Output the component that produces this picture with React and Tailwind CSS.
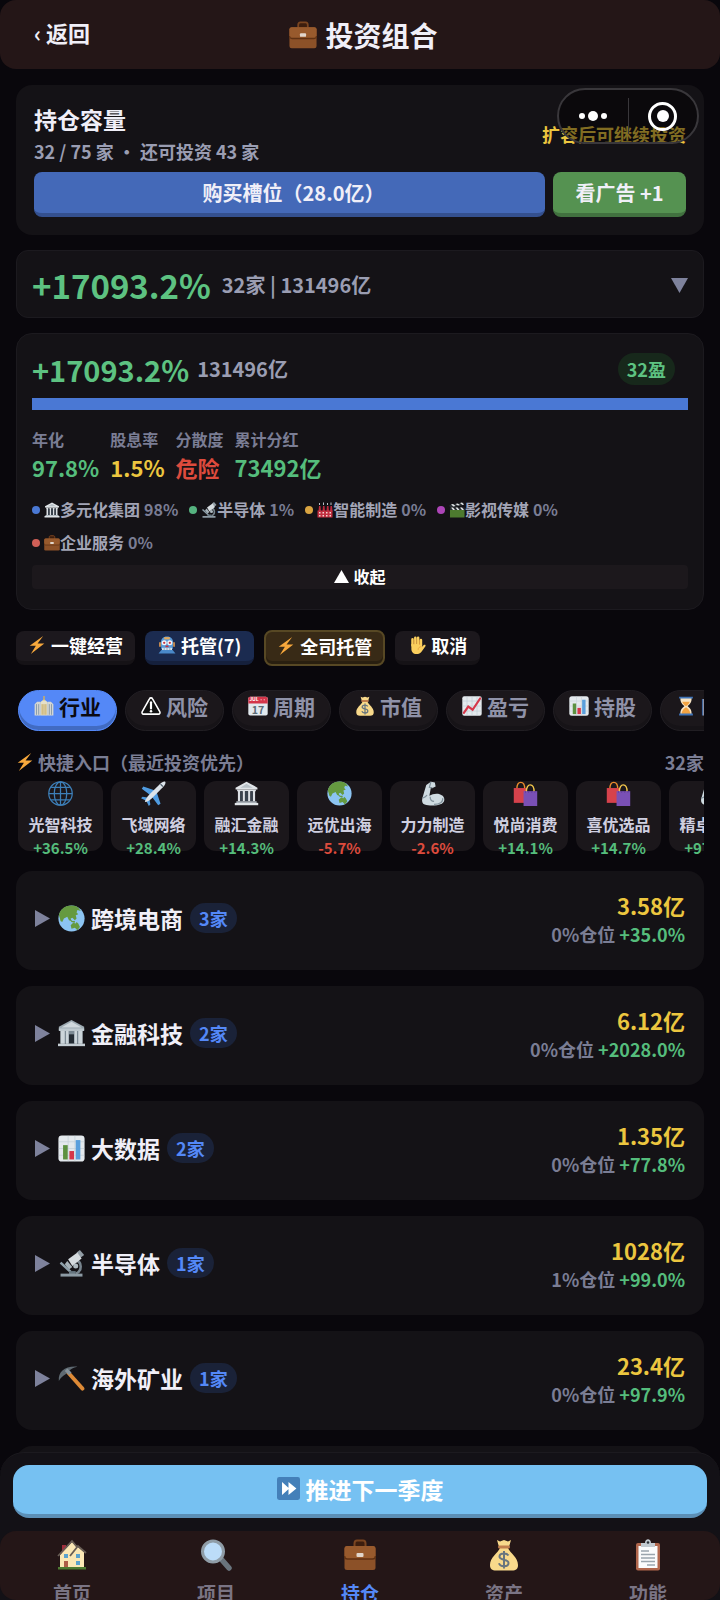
import { useState } from 'react'

const stats = [
  { label: '年化', value: '97.8%', color: 'text-[#55bd7c]' },
  { label: '股息率', value: '1.5%', color: 'text-[#ecc63f]' },
  { label: '分散度', value: '危险', color: 'text-[#dd4b3d]' },
  { label: '累计分红', value: '73492亿', color: 'text-[#55bd7c]' }
]

const sectors = [
  { icon: 'bank', name: '多元化集团', share: '98%', dot: 'bg-[#4a78d4]' },
  { icon: 'microscope', name: '半导体', share: '1%', dot: 'bg-[#56b380]' },
  { icon: 'factory', name: '智能制造', share: '0%', dot: 'bg-[#d9a441]' },
  { icon: 'clapper', name: '影视传媒', share: '0%', dot: 'bg-[#ad45b8]' },
  { icon: 'briefcase', name: '企业服务', share: '0%', dot: 'bg-[#d05f57]' }
]

const tabs = [
  { icon: 'city', name: '行业' },
  { icon: 'warning', name: '风险' },
  { icon: 'calendar', name: '周期' },
  { icon: 'money', name: '市值' },
  { icon: 'trend', name: '盈亏' },
  { icon: 'bars', name: '持股' },
  { icon: 'hourglass', name: '时间' }
]

const shortcuts = [
  { icon: 'globe', name: '光智科技', change: '+36.5%' },
  { icon: 'plane', name: '飞域网络', change: '+28.4%' },
  { icon: 'bank', name: '融汇金融', change: '+14.3%' },
  { icon: 'earth', name: '远优出海', change: '-5.7%' },
  { icon: 'arm', name: '力力制造', change: '-2.6%' },
  { icon: 'bags', name: '悦尚消费', change: '+14.1%' },
  { icon: 'bags', name: '喜优选品', change: '+14.7%' },
  { icon: 'arm', name: '精卓制造', change: '+97.2%' }
]

const industries = [
  { icon: 'earth', name: '跨境电商', count: 3, value: '3.58亿', share: '0%', change: '+35.0%' },
  { icon: 'bankOld', name: '金融科技', count: 2, value: '6.12亿', share: '0%', change: '+2028.0%' },
  { icon: 'bars', name: '大数据', count: 2, value: '1.35亿', share: '0%', change: '+77.8%' },
  { icon: 'microscope', name: '半导体', count: 1, value: '1028亿', share: '1%', change: '+99.0%' },
  { icon: 'pickaxe', name: '海外矿业', count: 1, value: '23.4亿', share: '0%', change: '+97.9%' }
]

const navItems = [
  { icon: 'house', name: '首页' },
  { icon: 'magnifier', name: '项目' },
  { icon: 'briefcase', name: '持仓' },
  { icon: 'money', name: '资产' },
  { icon: 'clipboard', name: '功能' }
]

const drawings = {
  briefcase: (
    <>
      <path d="M10.500 8V4.500C10.500 2.500 11.500 1.500 13 1.500h6c1.500 0 2.500 1 2.500 3V8" fill="#3d1e0e" stroke="#7b4520" strokeWidth="2" />
      <rect x="0.500" y="7" width="31" height="24" rx="2.500" fill="#8c5128" />
      <path d="M.5 10a3 3 0 0 1 3-3h25a3 3 0 0 1 3 3v7c0 2-1 3-3 3h-25c-2 0-3-1-3-3z" fill="#985a2d" />
      <path d="M.5 17c0 2 1 3 3 3h25c2 0 3-1 3-3" fill="none" stroke="#5f3113" strokeWidth="1.500" />
      <rect x="12.500" y="14" width="7" height="4" rx="1" fill="#e2d7cd" />
    </>
  ),
  bank: (
    <>
      <path d="M16 1 30 8.500V11H2V8.500z" fill="#e1e5e8" />
      <path d="M16 3.500 24 8.500H8z" fill="#b9c2c8" />
      <path d="M4 11h24v2H4zM5 13h3v13H5zM11 13h3v13h-3zM18 13h3v13h-3zM24 13h3v13h-3z" fill="#dce0e4" />
      <path d="M8 13h3v13H8zM14 13h4v13h-4zM21 13h3v13h-3z" fill="#39424d" />
      <path d="M3 26h26v2H3z" fill="#b5bec5" />
      <path d="M1 28h30v3H1z" fill="#e1e5e8" />
    </>
  ),
  bankOld: (
    <>
      <path d="M16 0 31 8v4H1V8z" fill="#9eabb3" />
      <path d="M16 2 28 9H4z" fill="#d0d8dd" />
      <path d="M3 12h26v16H3z" fill="#7d8b95" />
      <path d="M3 12h5v16H3zM9.500 12h3v16h-3zM19.500 12h3v16h-3zM24 12h5v16h-5z" fill="#ccd5da" />
      <path d="M13 17h6v11h-6z" fill="#242c34" />
      <path d="M1 10h30v3H1z" fill="#bfcad0" />
      <path d="M0 28h32v3H0z" fill="#c5ced4" />
    </>
  ),
  microscope: (
    <>
      <path d="M20 12c9 1 9 13 1 16" fill="none" stroke="#77848d" strokeWidth="3" />
      <path d="m22 3 4-3 5 6-4 3z" fill="#929da5" />
      <path d="m12 11 11-8 5 7-11 9z" fill="#d5dbdf" />
      <path d="m11 13 6 7-4 3-5-6z" fill="#a6b1b8" />
      <path d="m3 15 12 11" stroke="#8fa0aa" strokeWidth="3" />
      <circle cx="21" cy="19" r="3" fill="#aebac1" />
      <path d="M13 25h8v4h-8z" fill="#66757f" />
      <path d="M3 28h26v3.500H3z" fill="#8c9aa4" />
    </>
  ),
  factory: (
    <>
      <path d="M4 8h3l1 11H3zM12 8h3l1 11h-5zM20 8h3l1 11h-5zM27 8h3l1 11h-5z" fill="#bd2a3d" />
      <path d="M5 6V2M13 6V1M21 6V2M28 6V1" stroke="#b9c0c6" strokeWidth="2" />
      <path d="M1 17h30v14H1z" fill="#c12f40" />
      <path d="M4 20h3v3H4zM11 20h3v3h-3zM18 20h3v3h-3zM25 20h3v3h-3zM4 26h3v3H4zM11 26h3v3h-3zM18 26h3v3h-3zM25 26h3v3h-3z" fill="#f1d4cf" />
    </>
  ),
  clapper: (
    <>
      <path d="M2 15h29v16H2z" fill="#4d7a2f" />
      <path d="M2 11h29v5H2z" fill="#292f33" />
      <path d="m4 11 4 5h4l-4-5zM13 11l4 5h4l-4-5zM22 11l4 5h4l-4-5z" fill="#e8eaec" />
      <path d="M1 6 29 1l1 5L2 11z" fill="#292f33" />
      <path d="m4 5 5 4 4-1-5-4zM13 4l5 3 4-1-5-3zM22 2l5 4 3-1-4-4z" fill="#e8eaec" />
    </>
  ),
  zap: <path d="M27 0 3 17.500h11L5 32l24-18.500H17z" fill="#f7a83c" />,
  robot: (
    <>
      <path d="M5 13C5 5 9 1 16 1s11 4 11 12l-1 10H6z" fill="#5b9bd8" />
      <path d="M11 2h10v4H11z" fill="#e4a95c" />
      <path d="M2 11h3v8H2zM27 11h3v8h-3z" fill="#d8954f" />
      <circle cx="11" cy="12" r="4.500" fill="#f3f5f7" />
      <circle cx="21" cy="12" r="4.500" fill="#f3f5f7" />
      <circle cx="11" cy="12" r="2" fill="#c4323f" />
      <circle cx="21" cy="12" r="2" fill="#c4323f" />
      <path d="M14 17h4l1 3h-6z" fill="#c4323f" />
      <path d="M7 21h18v4H7z" fill="#d4e5f2" />
      <path d="M11 21v4M16 21v4M21 21v4" stroke="#5f7f9b" />
      <path d="M6 25h20l5 6H1z" fill="#4a89c9" />
    </>
  ),
  hand: (
    <>
      <path d="M8 17V6M13 15V3M18 15V3M23 17V7" stroke="#fbcf5e" strokeWidth="4.500" strokeLinecap="round" />
      <path d="M6 14h19v5l3-3c2-1 4 0 3 2l-7 10c-2 3-5 4-9 4-6 0-9-4-9-9z" fill="#fbcf5e" />
      <path d="M10.500 7v8M15.500 6v8M20.500 8v8M24 19c-4 0-6 2-6 6" stroke="#e29a3c" strokeWidth="1.200" fill="none" />
    </>
  ),
  city: (
    <>
      <path d="M1 13 5 9h5v22H1zM22 9h5l4 4v18h-9z" fill="#d4d6d2" />
      <path d="m10 10 6-5 6 5v21H10z" fill="#e5e0c8" />
      <path d="M16 0v7" stroke="#e0b64b" strokeWidth="2" />
      <path d="M4 13v17M7.500 13v17M24.500 13v17M28 13v17" stroke="#879aa9" strokeWidth="1.500" />
      <path d="M13 13v17M16 13v17M19 13v17" stroke="#c6a75a" strokeWidth="1.500" />
    </>
  ),
  warning: (
    <>
      <path d="M16 3c1 0 2 .5 2.500 1.500L30 25c1 2 0 4-2 4H4c-2 0-3-2-2-4L13.500 4.500C14 3.500 15 3 16 3z" fill="#111" stroke="#fff" strokeWidth="2.500" />
      <path d="M16 10v10" stroke="#fff" strokeWidth="3.500" strokeLinecap="round" />
      <circle cx="16" cy="24.500" r="2" fill="#fff" />
    </>
  ),
  calendar: (
    <>
      <rect x="0.500" y="1" width="31" height="30" rx="3" fill="#e2e9ee" />
      <path d="M.5 12V4a3 3 0 0 1 3-3h25a3 3 0 0 1 3 3v8z" fill="#d4364a" />
      <text x="2" y="8" fontSize="8" fontWeight="700" fill="#fff">JUL</text>
      <circle cx="21" cy="6" r="1.200" fill="#f0a0aa" />
      <circle cx="26" cy="6" r="1.200" fill="#f0a0aa" />
      <text x="16" y="28" fontSize="17" fontWeight="700" textAnchor="middle" fill="#5b6a74">17</text>
    </>
  ),
  money: (
    <>
      <path d="m9 1 3 1.500L16 1l4 1.500L23 1l-2 7H11z" fill="#f8d98b" />
      <path d="M12 9h8c2 5 10 9 10 17 0 4-2 5.500-6 5.500H8C4 31.500 2 30 2 26 2 18 10 14 12 9z" fill="#f8d98b" />
      <rect x="10" y="6.500" width="12" height="3" rx="1.500" fill="#c17f4d" />
      <path d="M20.500 16.500c-1-1.500-2.500-2-4.500-2-2.500 0-4.500 1.200-4.500 3 0 4.500 9 2 9 6.500 0 2-2 3.200-4.500 3.200S11.500 26 11 24.300M16 12v17.500" fill="none" stroke="#67757f" strokeWidth="2" />
    </>
  ),
  trend: (
    <>
      <rect x="0.500" y="0.500" width="31" height="31" rx="3" fill="#e4e9ed" />
      <path d="M1 8h30M1 16h30M1 24h30M8 1v30M16 1v30M24 1v30" stroke="#bfcbd3" strokeWidth="1" />
      <path d="M3 27 10 17l7 5L29 4" fill="none" stroke="#d5374a" strokeWidth="3.500" strokeLinecap="round" />
    </>
  ),
  bars: (
    <>
      <rect x="0.500" y="0.500" width="31" height="31" rx="4" fill="#e4e9ed" />
      <path d="M1 8h30M1 16h30M1 24h30M12 1v30M20 1v30" stroke="#c9d3da" strokeWidth="1" />
      <path d="M6 12h5.500v17H6z" fill="#5c9140" />
      <path d="M13.500 19H19v10h-5.500z" fill="#d5374a" />
      <path d="M21 6h5.500v23H21z" fill="#5a9fdc" />
    </>
  ),
  hourglass: (
    <>
      <path d="M7 3h18c0 7-2 9-6.500 13C23 20 25 22 25 29H7c0-7 2-9 6.500-13C9 12 7 10 7 3z" fill="#f7e4c4" />
      <path d="M10 9h12c-1 3-3 5-6 7.500C13 14 11 12 10 9zM16 18c3 2 7 5 7 11H9c0-6 4-9 7-11z" fill="#f3a341" />
      <path d="M5 1h22v3H5zM5 28h22v3H5z" fill="#3f74b8" />
    </>
  ),
  globe: (
    <g fill="none" stroke="#3d7fb8" strokeWidth="1.600">
      <circle cx="16" cy="16" r="15" />
      <ellipse cx="16" cy="16" rx="8" ry="15" />
      <path d="M16 1v30M1 16h30M4 8h24M4 24h24" />
    </g>
  ),
  plane: (
    <>
      <path d="M18 12 3 7l-2 3 12 9zM20 14l5 15-3 2-9-12z" fill="#4f9be0" />
      <path d="m8 21-6-1-2 2 6 3zM11 24l1 6-2 2-3-6z" fill="#4f9be0" />
      <path d="M5 27c0-3 3-7 6-10L24 4c3-3 6-4 7-3s0 4-3 7L15 21c-3 3-7 6-10 6z" fill="#dde4ea" />
      <path d="m25 4 3 3" stroke="#4d5c68" strokeWidth="1.500" />
    </>
  ),
  earth: (
    <>
      <circle cx="16" cy="16" r="15.500" fill="#8cc4f2" />
      <path d="M1 12C3 4 9 .5 16 .5c4 0 6 1 8 2.500l3 4-4-1-1 3 2 2-3 1 1 4-2 2-3-3-2 1 1 3-3-1-2-4-4 2-2 4-2-1-1-4z" fill="#659a40" />
      <path d="m15 24 3-3 3 1 1-2 2 2 2 4-3 4-3-3-4 1zM14 17l3 2 3 0 0 2-4-1z" fill="#659a40" />
    </>
  ),
  arm: (
    <>
      <path d="M8 5 14 1l5 1 1 5-4 2-2-1-2 11c5-3 12-4 17 0 3 3 3 8-1 10-7 3-16 3-22 1-3-1-4-4-3-8z" fill="#cfdbe1" />
      <path d="m14 1-2 7 4 1M3 22c3-1 5-2 6-4M13 20c0 4 2 6 5 6M18 30c7 0 12-3 11-8" fill="none" stroke="#82929c" strokeWidth="1.500" />
    </>
  ),
  bags: (
    <>
      <path d="M5 10C5-1 15-1 15 10" fill="none" stroke="#e98a2c" strokeWidth="1.800" />
      <path d="M1 9h17v19H1z" fill="#d6424c" />
      <path d="M17 14c0-12 10-12 10 0" fill="none" stroke="#f4c84c" strokeWidth="1.800" />
      <path d="M13.500 13H31v19H13.500z" fill="#7a50b5" />
      <path d="M16 13v2M20 13v2M24 13v2M28 13v2" stroke="#5d3a92" />
    </>
  ),
  pickaxe: (
    <>
      <path d="m12 9 17 19" stroke="#de8a36" strokeWidth="4.500" strokeLinecap="round" />
      <path d="M1 19C0 8 8 1 23 2c-5 1-8 3-10 5l-4 4c-3 2-6 4-8 8z" fill="#5f6a72" />
      <path d="m8 7 5 5 3-3-5-5z" fill="#87939b" />
    </>
  ),
  forward: (
    <>
      <rect width="32" height="32" rx="3" fill="#4480b9" />
      <path d="m7 7 10 9L7 25zM16 7l11 9-11 9z" fill="#fff" />
    </>
  ),
  house: (
    <>
      <path d="M6 6h4v9H6z" fill="#a02e3c" />
      <path d="M4 16 16 3l12 10v16H4z" fill="#fae7b5" />
      <path d="M2 17 16 2l5 6M14 17 22 7l8 7" fill="none" stroke="#685d55" strokeWidth="1.800" />
      <path d="M8 22h4v7H8z" fill="#ad5d48" />
      <path d="M8 15h4v4H8zM20 15h4v4h-4zM20 22h4v4h-4z" fill="#5aa2cd" />
      <path d="M2 28h28v2.500H2z" fill="#4d7b32" />
    </>
  ),
  magnifier: (
    <>
      <path d="m22 21 7 8" stroke="#69747d" strokeWidth="5.500" strokeLinecap="round" />
      <circle cx="13" cy="12.500" r="10.500" fill="#bcdcf8" stroke="#8f9ca6" strokeWidth="3" />
    </>
  ),
  clipboard: (
    <>
      <rect x="4" y="4" width="24" height="27.500" rx="2" fill="#b0664c" />
      <path d="M6.500 7h19v22h-19z" fill="#fafbfc" />
      <path d="M9 12h8M9 15.500h14M9 19h14M9 22.500h14M15 26h8" stroke="#9aa5ad" strokeWidth="1.500" />
      <path d="M9 8V4h4c0-5 6-5 6 0h4v4z" fill="#c2cad0" />
      <circle cx="16" cy="3.500" r="1.300" fill="#2c3238" />
    </>
  )
}

function Icon({ name, className }) {
  return (
    <svg viewBox="0 0 32 32" className={`shrink-0 ${className}`} aria-hidden="true">
      {drawings[name]}
    </svg>
  )
}

function Triangle({ points, className }) {
  return (
    <svg viewBox="0 0 16 16" preserveAspectRatio="none" className={`shrink-0 ${className}`} fill="currentColor" aria-hidden="true">
      <polygon points={points} />
    </svg>
  )
}

function Capsule() {
  return (
    <div className="absolute top-[88px] right-[21px] z-10 flex h-14 w-[142px] items-center rounded-full border-2 border-[#39373b] bg-black/45">
      <button aria-label="更多" className="flex h-full flex-1 items-center justify-center gap-[3px]">
        <span className="size-[6px] rounded-full bg-white" />
        <span className="size-[10px] rounded-full bg-white" />
        <span className="size-[6px] rounded-full bg-white" />
      </button>
      <span className="h-9 w-px bg-[#39373b]" />
      <button aria-label="关闭" className="flex h-full flex-1 items-center justify-center">
        <span className="flex size-[29px] items-center justify-center rounded-full border-3 border-white">
          <span className="size-3 rounded-full bg-white" />
        </span>
      </button>
    </div>
  )
}

export default function App() {
  const [tab, setTab] = useState('行业')
  const [page, setPage] = useState('持仓')

  return (
    <div className="relative flex h-screen flex-col overflow-hidden bg-[#09070c] font-['Noto_Sans_CJK_SC',sans-serif] font-bold text-[#f0eff8]">
      <header className="relative flex h-[69px] shrink-0 items-center justify-center rounded-2xl bg-[#241617] pl-[7px]">
        <button className="absolute top-4 left-[34px] text-[22px] leading-8">‹ 返回</button>
        <h1 className="flex items-center gap-2 text-[28px] leading-10">
          <Icon name="briefcase" className="size-7" />
          投资组合
        </h1>
      </header>
      <Capsule />

      <main className="min-h-0 flex-1 overflow-hidden px-4 pt-4">
        <section className="rounded-2xl bg-[#141216] px-[18px] py-[18px]">
          <div className="flex items-center justify-between">
            <div>
              <h2 className="mb-[2px] text-[23px] leading-8">持仓容量</h2>
              <p className="text-[18px] leading-7 text-[#9a9db2]">32 / 75 家 · 还可投资 43 家</p>
            </div>
            <p className="text-[18px] leading-7 text-[#ecc63f]">扩容后可继续投资</p>
          </div>
          <div className="mt-[7px] flex gap-2">
            <button className="h-[45px] flex-1 rounded-lg border-b-4 border-[#34508f] bg-[#4469b8] pl-2 text-[20px] leading-7">购买槽位（28.0亿）</button>
            <button className="h-[45px] w-[133px] rounded-lg border-b-4 border-[#41713f] bg-[#559251] text-[20px] leading-7">看广告 +1</button>
          </div>
        </section>

        <section className="mt-[15px] flex h-[68px] items-center rounded-xl border border-[#1c1a1f] bg-[#141216] px-[15px] pt-[2px]">
          <span className="text-[33px] leading-[42px] text-[#5dc281]">+17093.2%</span>
          <span className="ml-[11px] text-[20px] leading-7 text-[#9a9db2]">32家 | 131496亿</span>
          <button aria-label="展开" className="ml-auto text-[#7e829c]">
            <Triangle points="0,0 16,0 8,16" className="h-[15px] w-[17px]" />
          </button>
        </section>

        <section className="mt-[15px] rounded-2xl border border-[#1c1a1f] bg-[#141216] px-[15px] pt-[14px] pb-5">
          <div className="flex items-center">
            <span className="text-[29px] leading-[42px] text-[#5dc281]">+17093.2%</span>
            <span className="ml-2 text-[20px] leading-7 text-[#9a9db2]">131496亿</span>
            <span className="mr-[13px] ml-auto rounded-2xl bg-[#17281b] px-[9px] text-[18px] leading-8 text-[#5dc281]">32盈</span>
          </div>
          <div className="mt-2 h-3 bg-[#4a78d4]" />
          <dl className="mt-4 flex gap-[11px]">
            {stats.map((s) => (
              <div key={s.label}>
                <dt className="text-[16px] leading-[26px] text-[#7a7d94]">{s.label}</dt>
                <dd className={`text-[22px] leading-[30px] ${s.color}`}>{s.value}</dd>
              </div>
            ))}
          </dl>
          <ul className="mt-[11px] flex flex-wrap gap-x-[11px] text-[16px] leading-[33px] text-[#a3a5b6]">
            {sectors.map((s) => (
              <li key={s.name} className="flex items-center">
                <span className={`mr-1 size-2 rounded-full ${s.dot}`} />
                <Icon name={s.icon} className="size-4" />
                <span>{s.name}</span>
                <span className="ml-1 text-[#7a7d94]">{s.share}</span>
              </li>
            ))}
          </ul>
          <button className="mt-[6px] flex h-6 w-full items-center justify-center gap-1 rounded-sm bg-[#1c181c] pb-[2px] text-[16px] leading-[22px] text-white">
            <Triangle points="0,16 16,16 8,0" className="h-[13px] w-[15px]" />
            收起
          </button>
        </section>

        <div className="mt-5 flex h-9 items-center gap-[10px] text-[18px] leading-6 text-white">
          <button className="flex h-[34px] items-center gap-[5px] rounded-lg border-b-4 border-[#151216] bg-[#1c181d] px-3 pb-[2px]">
            <Icon name="zap" className="size-[18px]" />一键经营
          </button>
          <button className="flex h-[34px] items-center gap-[5px] rounded-lg border-b-4 border-[#15203c] bg-[#1b2b50] px-[13px] pb-[2px]">
            <Icon name="robot" className="size-[18px]" />托管(7)
          </button>
          <button className="flex h-9 items-center gap-[5px] rounded-lg border-2 border-[#574824] bg-[#382a16] px-[11px] pb-1 shadow-[inset_0_-3px_0_#291f10]">
            <Icon name="zap" className="size-[18px]" />全司托管
          </button>
          <button className="flex h-[34px] items-center gap-[5px] rounded-lg border-b-4 border-[#151216] bg-[#1c181d] px-[13px] pb-[2px]">
            <Icon name="hand" className="size-[18px]" />取消
          </button>
        </div>

        <div className="mt-6 flex gap-2 overflow-hidden pl-[2px]">
          {tabs.map((t) => (
            <button
              key={t.name}
              onClick={() => setTab(t.name)}
              className={`flex h-[41px] w-[99px] shrink-0 items-center justify-center gap-[5px] rounded-full border pb-[9px] text-[21px] leading-[30px] ${t.name === tab ? 'border-[#5488f7] bg-[#5488f7] text-[#0b0a10] shadow-[inset_0_-4px_0_#416bc2]' : 'border-[#211e23] bg-[#1b171b] text-[#8f92a8] shadow-[inset_0_-4px_0_#161317]'}`}
            >
              <Icon name={t.icon} className="size-5" />
              {t.name}
            </button>
          ))}
        </div>

        <div className="mt-[14px] flex items-center justify-between text-[18px] leading-[34px] text-[#7a7d94]">
          <h2 className="flex items-center gap-1"><Icon name="zap" className="size-[18px]" />快捷入口（最近投资优先）</h2>
          <span>32家</span>
        </div>
        <div className="mt-[2px] flex gap-2 overflow-hidden pb-2 pl-[2px]">
          {shortcuts.map((s) => (
            <button key={s.name} className="flex h-[70px] w-[85px] shrink-0 flex-col items-center rounded-xl bg-[#1b171b]">
              <Icon name={s.icon} className="size-[25px]" />
              <span className="mt-[6px] text-[16px] leading-6 whitespace-nowrap text-[#cfcfe0]">{s.name}</span>
              <span className={`text-[15px] leading-[23px] ${s.change.startsWith('-') ? 'text-[#dd4b3d]' : 'text-[#55bd7c]'}`}>{s.change}</span>
            </button>
          ))}
        </div>

        <div className="mt-3 grid gap-4">
          {industries.map((item) => (
            <section key={item.name} className="flex items-center justify-between rounded-2xl bg-[#141216] px-[19px] pt-[19px] pb-[22px]">
              <div className="flex items-center pb-[2px]">
                <Triangle points="0,0 16,8 0,16" className="h-[17px] w-[15px] text-[#7e829c]" />
                <Icon name={item.icon} className="ml-2 size-[27px]" />
                <h3 className="ml-[6px] text-[23px] leading-8">{item.name}</h3>
                <span className="ml-[7px] rounded-2xl bg-[#1a2238] px-[9px] text-[18px] leading-[30px] text-[#5488f7]">{item.count}家</span>
              </div>
              <div className="text-right">
                <p className="text-[22px] leading-[30px] text-[#ecc63f]">{item.value}</p>
                <p className="text-[18px] leading-7 text-[#55bd7c]">
                  <span className="text-[#7a7d94]">{item.share}仓位</span> {item.change}
                </p>
              </div>
            </section>
          ))}
          <section className="h-[99px] rounded-2xl bg-[#141216]" />
        </div>
      </main>

      <footer className="absolute inset-x-0 bottom-0 rounded-t-3xl border-t border-[#1c1a1f] bg-[#131116]">
        <div className="px-[13px] pt-3 pb-[13px]">
          <button className="flex h-[53px] w-full items-center justify-center gap-[6px] rounded-2xl border-b-4 border-[#5b8fb6] bg-[#76c1f2] pb-[2px] text-[23px] leading-8 text-white">
            <Icon name="forward" className="size-[23px]" />
            推进下一季度
          </button>
        </div>
        <nav className="flex h-[69px] overflow-hidden rounded-2xl bg-[#241617]">
          {navItems.map((n) => (
            <button
              key={n.name}
              onClick={() => setPage(n.name)}
              className={`flex flex-1 flex-col items-center pt-2 text-[19px] leading-7 ${n.name === page ? 'text-[#5488f7]' : 'text-[#7a7484]'}`}
            >
              <Icon name={n.icon} className="size-8" />
              <span className="mt-2">{n.name}</span>
            </button>
          ))}
        </nav>
      </footer>
    </div>
  )
}
